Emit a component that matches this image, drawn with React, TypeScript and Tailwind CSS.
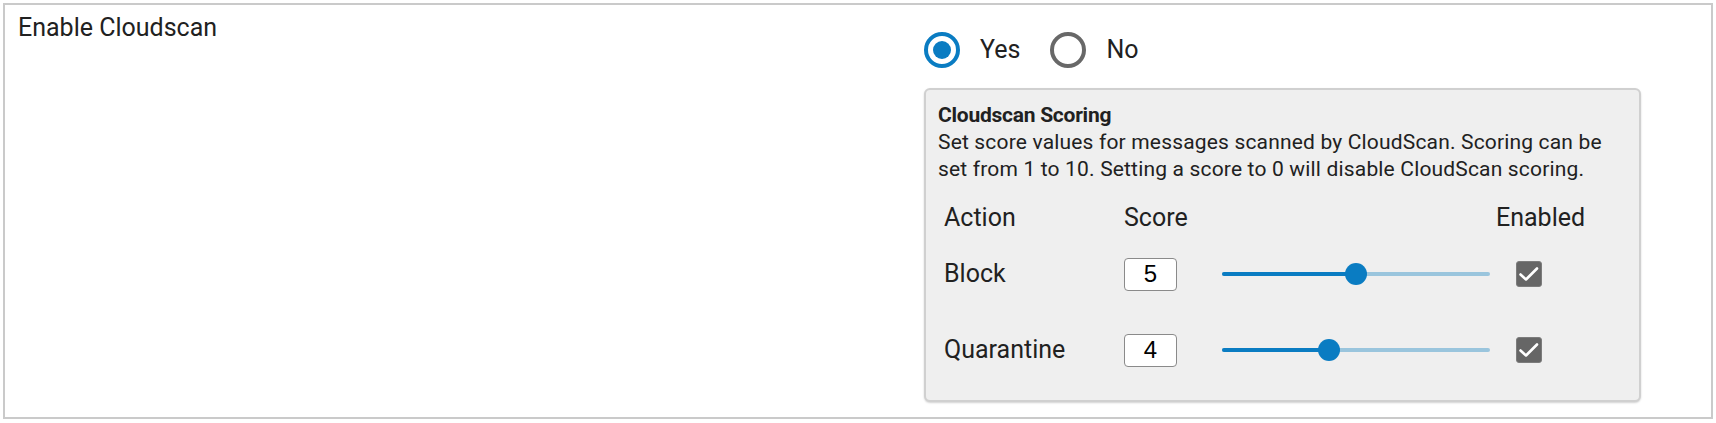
import { useState } from 'react';

type Rule = { action: string; score: number; enabled: boolean };

const initialRules: Rule[] = [
  { action: 'Block', score: 5, enabled: true },
  { action: 'Quarantine', score: 4, enabled: true },
];

function Radio({ checked, label, onClick }: { checked: boolean; label: string; onClick: () => void }) {
  return (
    <button type="button" onClick={onClick} className="flex items-center gap-[20px] h-[36px]">
      {checked ? (
        <span className="w-[36px] h-[36px] rounded-full border-[4.5px] border-[#0a7cc2] flex items-center justify-center">
          <span className="w-[18px] h-[18px] rounded-full bg-[#0a7cc2]" />
        </span>
      ) : (
        <span className="w-[36px] h-[36px] rounded-full border-[4px] border-[#686868]" />
      )}
      <span className="text-[25px] leading-[36px] text-[#212121]">{label}</span>
    </button>
  );
}

function Slider({ value }: { value: number }) {
  const pct = (value / 10) * 100;
  return (
    <div className="relative w-[268px] h-[22px] flex items-center">
      <div className="w-full h-[4px] rounded-full bg-[#9ac5dd]" />
      <div className="absolute left-0 h-[4px] rounded-l-full bg-[#0a7cc2]" style={{ width: `${pct}%` }} />
      <div
        className="absolute w-[22px] h-[22px] rounded-full bg-[#0a7cc2] -translate-x-1/2"
        style={{ left: `${pct}%` }}
      />
    </div>
  );
}

function Checkbox({ checked }: { checked: boolean }) {
  return (
    <span className="w-[26px] h-[26px] rounded-[3px] bg-[#666666] border border-[#7c7c7c] flex items-center justify-center">
      {checked && (
        <svg width="24" height="24" viewBox="0 0 24 24" fill="none">
          <path d="M3.5 12.5 L9 17.5 L20 6.5" stroke="#ffffff" strokeWidth="2.6" strokeLinecap="round" strokeLinejoin="round" />
        </svg>
      )}
    </span>
  );
}

export default function App() {
  const [enabled, setEnabled] = useState(true);
  const [rules] = useState(initialRules);

  return (
    <div className="w-[1716px] h-[423px] bg-white font-['Roboto',sans-serif] text-[#212121]">
      <div className="ml-[3px] mt-[3px] w-[1710px] h-[416px] border-2 border-[#cacaca] flex">
        <div className="w-[919px] pl-[13px] pt-[5px] text-[25px] leading-[36px]">Enable Cloudscan</div>

        <div className="flex flex-col pt-[27px]">
          <div className="flex items-center">
            <Radio checked={enabled} label="Yes" onClick={() => setEnabled(true)} />
            <div className="w-[30px]" />
            <Radio checked={!enabled} label="No" onClick={() => setEnabled(false)} />
          </div>

          <div className="mt-[20px] w-[717px] h-[314px] rounded-[6px] border-2 border-[#d0d0d0] bg-[#efefef] shadow-[0_1px_2px_rgba(0,0,0,0.18)] px-[12px] pt-[12px]">
            <div className="text-[21px] leading-[27px] font-bold tracking-[-0.25px]">Cloudscan Scoring</div>
            <p className="text-[21px] leading-[27px] tracking-[0.17px]">
              Set score values for messages scanned by CloudScan. Scoring can be set from 1 to 10. Setting a score to 0
              will disable CloudScan scoring.
            </p>

            <div className="mt-[17px] pl-[6px]">
              <div className="flex items-center h-[36px] text-[25px] leading-[36px]">
                <div className="w-[180px]">Action</div>
                <div className="w-[98px]">Score</div>
                <div className="w-[266px]" />
                <div className="ml-[8px]">Enabled</div>
              </div>
              {rules.map((rule) => (
                <div key={rule.action} className="flex items-center h-[76px] text-[25px]">
                  <div className="w-[180px]">{rule.action}</div>
                  <div className="w-[98px]">
                    <div className="w-[53px] h-[33px] rounded-[4px] border border-[#8a8a8a] bg-white flex items-center justify-center font-['Liberation_Sans',sans-serif] text-[24px] text-black">
                      {rule.score}
                    </div>
                  </div>
                  <Slider value={rule.score} />
                  <div className="ml-[26px]">
                    <Checkbox checked={rule.enabled} />
                  </div>
                </div>
              ))}
            </div>
          </div>
        </div>
      </div>
    </div>
  );
}
